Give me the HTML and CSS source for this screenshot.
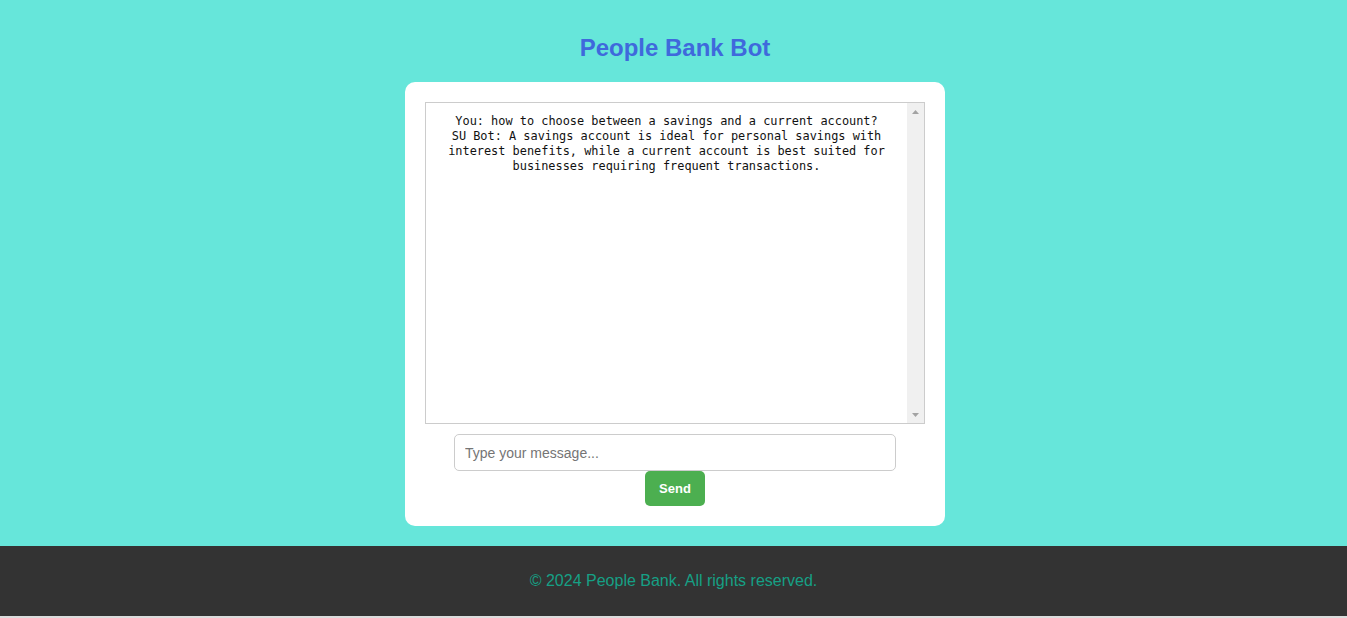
FILE: index.html
```html
<!DOCTYPE html>
<html lang="en">
<head>
<meta charset="utf-8">
<title>People Bank Bot</title>
<link rel="stylesheet" href="styles.css">
</head>
<body>
<main class="page">
  <h1 class="title">People Bank Bot</h1>
  <section class="chat-card">
    <div class="chat-log">
      <div class="chat-text">You: how to choose between a savings and a current account?
SU Bot: A savings account is ideal for personal savings with interest benefits, while a current account is best suited for businesses requiring frequent transactions.</div>
      <div class="scrollbar" aria-hidden="true">
        <svg class="arrow" width="7" height="4" viewBox="0 0 7 4"><polygon points="3.5,0 7,4 0,4" fill="#a3a3a3"/></svg>
        <svg class="arrow" width="7" height="4" viewBox="0 0 7 4"><polygon points="0,0 7,0 3.5,4" fill="#a3a3a3"/></svg>
      </div>
    </div>
    <input class="chat-input" type="text" placeholder="Type your message...">
    <button class="send-btn" type="button">Send</button>
  </section>
</main>
<footer class="footer">
  <p class="footer-text">© 2024 People Bank. All rights reserved.</p>
</footer>
</body>
</html>
```

FILE: styles.css
```css
html {
  background: #dcdcdc;
}
body {
  margin: 0;
  background: #66e6da;
  font-family: "Liberation Sans", Arial, sans-serif;
}
.page {
  display: flex;
  flex-direction: column;
  align-items: center;
  padding: 34px 0 20px 3px;
}
.title {
  margin: 0 0 20px;
  height: 28px;
  line-height: 28px;
  font-size: 24px;
  font-weight: bold;
  color: #3f69dc;
}
.chat-card {
  width: 540px;
  box-sizing: border-box;
  padding: 20px;
  background: #fff;
  border-radius: 10px;
  display: flex;
  flex-direction: column;
  align-items: center;
}
.chat-log {
  display: flex;
  width: 500px;
  height: 322px;
  box-sizing: border-box;
  border: 1px solid #cccccc;
  background: #fff;
}
.chat-text {
  flex: 1;
  padding: 11px 10px 10px;
  white-space: pre-wrap;
  font-family: "DejaVu Sans Mono", "Liberation Mono", monospace;
  font-size: 11.9px;
  line-height: 15px;
  color: #111;
  text-align: center;
}
.scrollbar {
  width: 17px;
  background: #f0f0f0;
  display: flex;
  flex-direction: column;
  justify-content: space-between;
  align-items: center;
  padding: 7px 0 6px;
  box-sizing: border-box;
}
.arrow {
  display: block;
}
.chat-input {
  display: block;
  width: 442px;
  height: 37px;
  box-sizing: border-box;
  margin: 10px 0 0;
  padding: 0 10px;
  border: 1px solid #cccccc;
  border-radius: 5px;
  font-family: "Liberation Sans", Arial, sans-serif;
  font-size: 14px;
  color: #333;
  outline: none;
}
.chat-input::placeholder {
  color: #757575;
}
.send-btn {
  display: block;
  width: 60px;
  height: 35px;
  margin: 0;
  padding: 0;
  border: none;
  border-radius: 5px;
  background: #4caf50;
  color: #fff;
  font-family: "Liberation Sans", Arial, sans-serif;
  font-size: 13px;
  font-weight: bold;
  cursor: pointer;
}
.footer {
  background: #333333;
  height: 70px;
  display: flex;
  align-items: center;
  justify-content: center;
}
.footer-text {
  margin: 0;
  font-size: 16px;
  color: #16a085;
}
```
